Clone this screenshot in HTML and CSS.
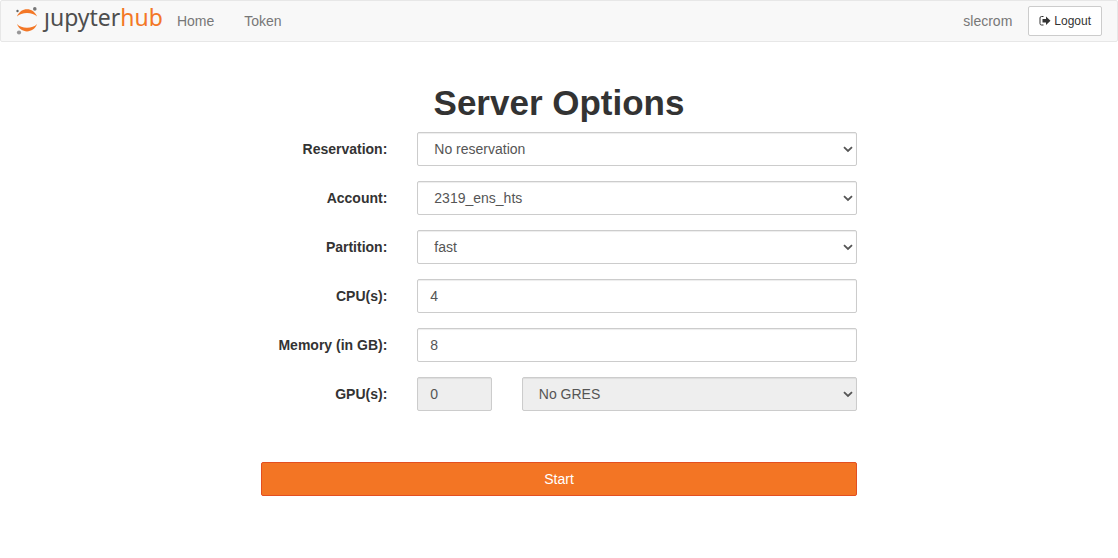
FILE: index.html
```html
<!DOCTYPE html>
<html lang="en">
<head>
<meta charset="utf-8">
<title>JupyterHub</title>
<link rel="stylesheet" href="styles.css">
</head>
<body>
<nav class="navbar">
  <a class="brand" href="#" aria-label="JupyterHub">
    <svg class="brand-mark" viewBox="0 0 24 30" aria-hidden="true">
      <path fill="#f37726" d="M1 11.600C2.800 6.800 6.800 4.300 11 4.300S19.300 6.800 21 11.600C18.800 9.100 15.200 7.900 11 7.900S3.300 9.100 1 11.600Z"/>
      <path fill="#f37726" d="M1 19.100C2.800 23.900 6.800 26.400 11 26.400S19.300 23.900 21 19.100C18.800 21.600 15.200 22.800 11 22.800S3.300 21.600 1 19.100Z"/>
      <circle fill="#767677" cx="18.800" cy="3.900" r="1.800"/>
      <circle fill="#616262" cx="1.500" cy="6" r="1.200"/>
      <circle fill="#989798" cx="3" cy="27.500" r="2.100"/>
    </svg>
    <span class="wordmark">ȷupyter<span class="wordmark-hub">hub</span></span>
  </a>
  <a class="nav-link" href="#">Home</a>
  <a class="nav-link" href="#">Token</a>
  <span class="user">slecrom</span>
  <button class="logout" type="button">
    <svg class="logout-icon" viewBox="0 0 12 12" aria-hidden="true">
      <path fill="none" stroke="#333" d="M4.500 1.500H2.500Q1 1.500 1 3V8.500Q1 10 2.500 10H4.500"/>
      <path fill="#333" d="M3.500 4H7V1.500L11.500 5.800L7 10V7.500H3.500Z"/>
    </svg>
    Logout
  </button>
</nav>
<main class="container">
  <h1 class="title">Server Options</h1>
  <form class="options">
    <div class="row">
      <label class="label" for="reservation">Reservation:</label>
      <div class="field"><select class="control select" id="reservation"><option>No reservation</option></select></div>
    </div>
    <div class="row">
      <label class="label" for="account">Account:</label>
      <div class="field"><select class="control select" id="account"><option>2319_ens_hts</option></select></div>
    </div>
    <div class="row">
      <label class="label" for="partition">Partition:</label>
      <div class="field"><select class="control select" id="partition"><option>fast</option></select></div>
    </div>
    <div class="row">
      <label class="label" for="cpus">CPU(s):</label>
      <div class="field"><input class="control" id="cpus" type="text" inputmode="numeric" value="4"></div>
    </div>
    <div class="row">
      <label class="label" for="memory">Memory (in GB):</label>
      <div class="field"><input class="control" id="memory" type="text" inputmode="numeric" value="8"></div>
    </div>
    <div class="row">
      <label class="label" for="gpus">GPU(s):</label>
      <div class="field field-small"><input class="control" id="gpus" type="text" value="0" disabled></div>
      <div class="field"><select class="control select" aria-label="GPU type" disabled><option>No GRES</option></select></div>
    </div>
    <div class="actions"><button class="start" type="submit">Start</button></div>
  </form>
</main>
</body>
</html>
```

FILE: styles.css
```css
* {
  box-sizing: border-box;
}

body {
  margin: 0;
  background: #fff;
  color: #333;
  font: 14px/20px "Helvetica Neue", Helvetica, "Liberation Sans", Arial, sans-serif;
}

.navbar {
  display: flex;
  align-items: center;
  height: 42px;
  padding: 0 15px;
  background: #f8f8f8;
  border: 1px solid #e7e7e7;
  border-radius: 2px;
}

.brand {
  display: flex;
  align-items: center;
  gap: 4px;
  padding-bottom: 2px;
  text-decoration: none;
}

.brand-mark {
  width: 24px;
  height: 30px;
}

.wordmark {
  padding-bottom: 6px;
  color: #4e4e4e;
  font: 23px/30px "Noto Sans", "Open Sans", sans-serif;
}

.wordmark-hub {
  color: #f37726;
}

.nav-link {
  padding: 0 15px;
  color: #777;
  text-decoration: none;
}

.brand + .nav-link {
  padding-left: 14px;
}

.user {
  margin-left: auto;
  margin-right: 16px;
  color: #777;
}

.logout {
  display: flex;
  align-items: center;
  gap: 3px;
  height: 30px;
  padding: 0 10px;
  background: #fff;
  border: 1px solid #ccc;
  border-radius: 2px;
  color: #333;
  font: 12px/18px "Liberation Sans", Arial, sans-serif;
}

.logout-icon {
  width: 12px;
  height: 12px;
}

.container {
  max-width: 940px;
  margin: 0 auto;
}

.title {
  margin: 41px 0 10px;
  font-size: 35px;
  font-weight: 700;
  line-height: 39px;
  text-align: center;
}

.options {
  width: 66.6667%;
  margin: 0 auto;
}

.row {
  display: flex;
  margin-bottom: 15px;
}

.label {
  flex: 0 0 25%;
  padding: 7px 15px 0;
  font-weight: 700;
  text-align: right;
  white-space: nowrap;
}

.field {
  flex: 1;
  padding: 0 15px;
}

.field-small {
  flex: 0 0 16.6667%;
}

.control {
  display: block;
  width: 100%;
  height: 34px;
  padding: 6px 12px;
  background-color: #fff;
  border: 1px solid #ccc;
  border-radius: 2px;
  box-shadow: inset 0 1px 1px rgba(0, 0, 0, 0.075);
  color: #555;
  font: inherit;
}

.select {
  appearance: none;
  padding: 6px 16px;
  background-image: url("data:image/svg+xml,%3Csvg xmlns='http://www.w3.org/2000/svg' viewBox='0 0 10 7'%3E%3Cpath d='M1 1.200L5 5L9 1.200' fill='none' stroke='%23555' stroke-width='1.800'/%3E%3C/svg%3E");
  background-position: right 3px center;
  background-repeat: no-repeat;
  background-size: 10px 7px;
}

.control:disabled {
  background-color: #eee;
  opacity: 1;
}

.actions {
  padding: 36px 15px 0;
}

.start {
  display: block;
  width: 100%;
  height: 34px;
  background: #f37524;
  border: 1px solid #e34f21;
  border-radius: 2px;
  color: #fff;
  font: inherit;
}
```
